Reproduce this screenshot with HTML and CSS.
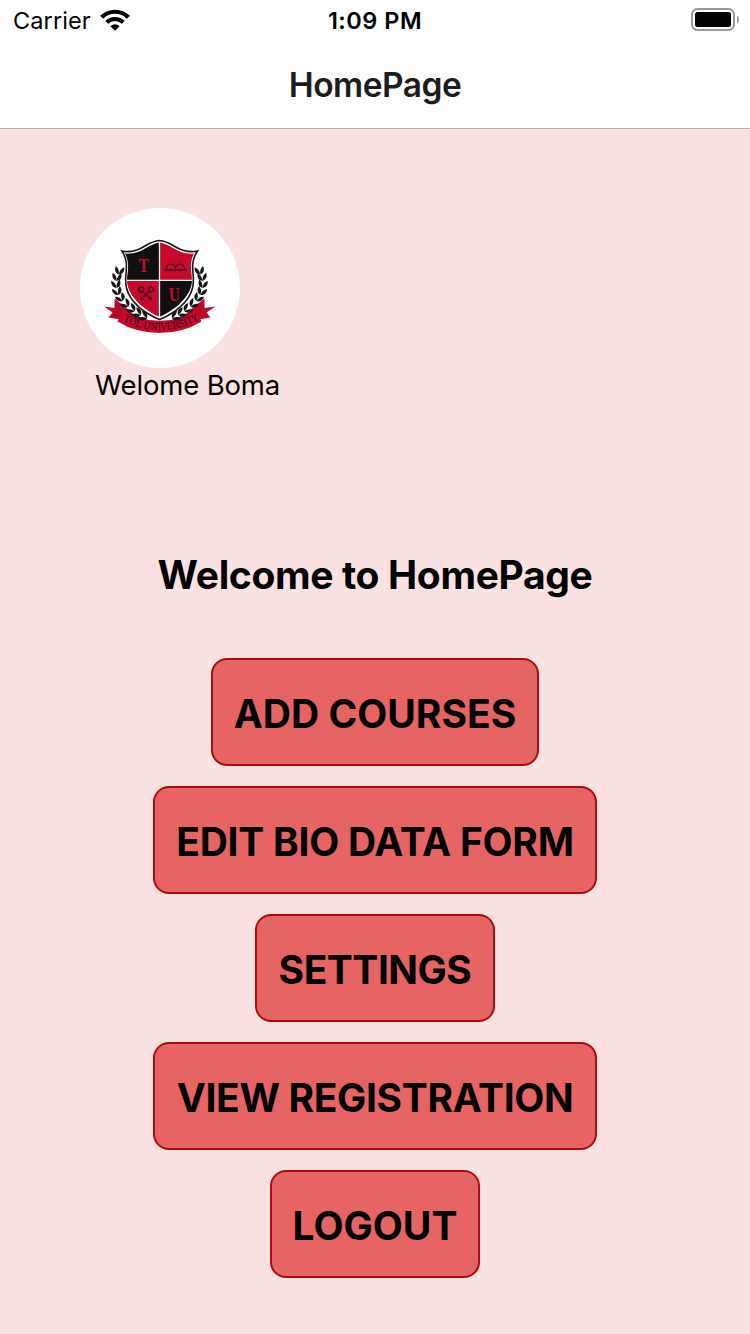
FILE: index.html
```html
<!DOCTYPE html>
<html lang="en">
<head>
<meta charset="utf-8">
<title>HomePage</title>
<link rel="stylesheet" href="styles.css">
</head>
<body>
<header class="header">
  <div class="status">
    <div class="status-left">
      <span class="carrier">Carrier</span>
      <svg class="wifi" width="30" height="22" viewBox="0 0 30 22" fill="none" stroke="#000">
        <path d="M1.6 8.2A19.2 19.2 0 0 1 28.4 8.2" stroke-width="4.2"/>
        <path d="M6.7 13.3A12 12 0 0 1 23.3 13.3" stroke-width="4"/>
        <path d="M10.4 17.2Q15 13.2 19.6 17.2L15 21.8Z" fill="#000" stroke="none"/>
      </svg>
    </div>
    <span class="time">1:09 PM</span>
    <div class="status-right">
      <svg class="battery" width="49" height="24" viewBox="0 0 49 24">
        <rect x="1" y="1" width="42" height="21" rx="5.5" fill="#fff" stroke="#999" stroke-width="2"/>
        <rect x="4" y="4" width="36" height="15" rx="2.5"/>
        <path d="M46 7.5Q48 8.5 48 11.5T46 15.5Z" fill="#999"/>
      </svg>
    </div>
  </div>
  <h1 class="title">HomePage</h1>
</header>
<main class="main">
  <section class="profile">
    <svg class="avatar" width="160" height="160" viewBox="0 0 160 160">
      <defs>
        <g id="leaves">
          <path d="M0 3.5C-4.6 2.6-5.2-1-4.8-4C-1.8-2.6 0 0 0 3.5Z"/>
          <path d="M0 3.5C4.6 2.2 5-1.5 3.6-4.8C1-2.5 0 0 0 3.5Z"/>
        </g>
        <g id="laurel">
          <use href="#leaves" transform="translate(39.5 63) rotate(15)"/>
          <use href="#leaves" transform="translate(37 69.5) rotate(8)"/>
          <use href="#leaves" transform="translate(36.3 76.5) rotate(-3)"/>
          <use href="#leaves" transform="translate(37.5 83.5) rotate(-15)"/>
          <use href="#leaves" transform="translate(41 90) rotate(-28)"/>
          <use href="#leaves" transform="translate(46 96) rotate(-40)"/>
          <use href="#leaves" transform="translate(52 101) rotate(-48)"/>
          <use href="#leaves" transform="translate(58 105) rotate(-54)"/>
          <use href="#leaves" transform="translate(64 108.5) rotate(-56)"/>
        </g>
        <clipPath id="field">
          <path d="M79.5 34.5Q73 35.5 66 40Q56 46.5 45 45.5C52 59 44.5 68 48 79C52 92 66 103 79.5 109C93 103 107 92 111 79C114.5 68 107 59 114 45.5Q103 46.5 93 40Q86 35.5 79.5 34.5Z"/>
        </clipPath>
        <path id="motto" d="M43 113Q79.5 132 118 112.5"/>
      </defs>
      <circle cx="80" cy="80" r="80" fill="#fff"/>
      <path d="M24 98.5L34.5 100V90.5L49 102L43 112L28.5 109.5L32.5 104.5Z" fill="#b90a2c"/>
      <path d="M135.5 98.5L124.5 100V90.5L110 102L116 112L130.5 109.5L126.5 104.5Z" fill="#b90a2c"/>
      <path d="M44 101Q60 112 79.5 112.5T115 101L121.5 113.5Q103 125 79.5 125T37.5 113.5Z" fill="#c7092d"/>
      <path d="M44 101L59 109L66 111L57 113Z" fill="#8e0b24"/>
      <path d="M115 101L100 109L93 111L102 113Z" fill="#8e0b24"/>
      <path d="M37 88Q50 106 68 112L79.5 112.5L91 112Q109 106 122 88L110 82L79.5 108L49 82Z" fill="#fff"/>
      <use href="#laurel" fill="#181818"/>
      <use href="#laurel" fill="#181818" transform="translate(159 0) scale(-1 1)"/>
      <path d="M79.5 32.5Q73 33 65 38Q53 45.5 42 43C51 57 43 67 46.5 80C50 95 66 106 79.5 111.5C93 106 109 95 112.5 80C116 67 108 57 117.5 43Q106 45.5 94 38Q86 33 79.5 32.5Z" fill="#fff" stroke="#181818" stroke-width="1.6"/>
      <g clip-path="url(#field)">
        <path d="M40 30H79V72H40ZM80 73H120V115H80Z" fill="#101010"/>
        <path d="M80 30H120V72H80ZM40 73H79V115H40Z" fill="#c7092d"/>
      </g>
      <path d="M79.5 35V109M47 72.4H112" stroke="#fff" stroke-width="1.3"/>
      <text class="monogram" x="58.5" y="64" textLength="10.5" lengthAdjust="spacingAndGlyphs">T</text>
      <text class="monogram" x="88.8" y="93" textLength="11" lengthAdjust="spacingAndGlyphs">U</text>
      <path d="M85 62.5L88 57Q92 54.5 95.5 58.5Q99 54.5 103 57L106 62.5Q99 60.5 95.5 62.5Q92 60.5 85 62.5ZM86 62.2H105M95.5 58.5V62" fill="none" stroke="#48101b" stroke-width="1.2"/>
      <g fill="none" stroke="#48101b" stroke-width="1.5">
        <circle cx="61" cy="81.5" r="2.4"/><circle cx="71" cy="81.5" r="2.4"/>
        <path d="M62.5 83.5L72 92M69.5 83.5L60 92M68.5 92L71.5 89M63.5 92L60.5 89"/>
      </g>
      <text class="motto"><textPath href="#motto" textLength="79" lengthAdjust="spacingAndGlyphs">TOL UNIVERSITY</textPath></text>
    </svg>
    <p class="greeting">Welome Boma</p>
  </section>
  <h2 class="heading">Welcome to HomePage</h2>
  <nav class="menu">
    <button class="button add">ADD COURSES</button>
    <button class="button edit">EDIT BIO DATA FORM</button>
    <button class="button settings">SETTINGS</button>
    <button class="button view">VIEW REGISTRATION</button>
    <button class="button logout">LOGOUT</button>
  </nav>
</main>
</body>
</html>
```

FILE: styles.css
```css
* { box-sizing: border-box; margin: 0; }
body {
  width: 750px;
  height: 1334px;
  overflow: hidden;
  background: #fae2e2;
  color: #000;
  font-family: Inter, "Liberation Sans", sans-serif;
}
.header {
  height: 129px;
  background: #fff;
  border-bottom: 1px solid #b0b0b0;
}
.status {
  height: 40px;
  display: grid;
  grid-template-columns: 1fr auto 1fr;
  align-items: center;
}
.status-left { display: flex; align-items: center; padding-left: 13px; gap: 9px; }
.carrier { font-size: 23.5px; line-height: 40px; letter-spacing: 0.1px; padding-top: 1px; }
.wifi { margin-bottom: 1px; }
.time { font-size: 23.5px; font-weight: 600; line-height: 40px; letter-spacing: 0.5px; padding-top: 1px; }
.status-right { display: flex; justify-content: flex-end; padding: 0 10px 1px 0; }
.title {
  font-size: 33.5px;
  font-weight: 600;
  line-height: 90px;
  text-align: center;
  letter-spacing: -0.5px;
  color: #1c1c1e;
}
.profile { height: 421px; padding: 79px 80px 0; }
.avatar { display: block; }
.greeting { font-size: 27.5px; line-height: 34px; letter-spacing: -0.15px; padding-left: 15px; }
.monogram { font: 700 18.5px "Liberation Serif", serif; fill: #c7092d; }
.motto { font: 10px "DejaVu Serif", serif; fill: #2d0b13; }
.heading {
  font-size: 39px;
  font-weight: 700;
  line-height: 49px;
  text-align: center;
  letter-spacing: -0.35px;
}
.menu { display: flex; flex-direction: column; align-items: center; gap: 20px; margin-top: 59px; }
.button {
  height: 108px;
  padding: 3px 0 0;
  border: 2px solid #ad0d12;
  border-radius: 16px;
  background: #e66464;
  color: #000;
  font: 700 39px/48px Inter, "Liberation Sans", sans-serif;
  white-space: nowrap;
}
.add { width: 328px; }
.edit, .view { width: 444px; }
.edit { letter-spacing: -0.25px; }
.view { letter-spacing: -0.35px; }
.settings { width: 240px; letter-spacing: -0.5px; }
.logout { width: 210px; }
```
